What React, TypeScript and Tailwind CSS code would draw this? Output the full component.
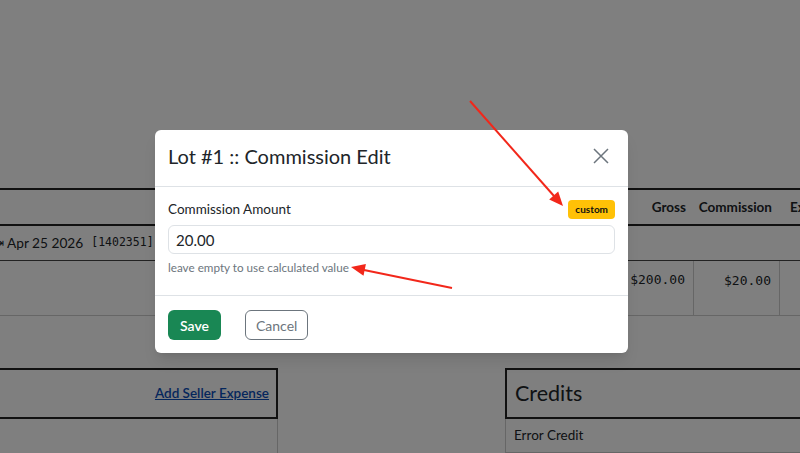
import React from 'react';

const sans = "font-['Lato','Noto_Sans',sans-serif]";
const mono = "font-['DejaVu_Sans_Mono','Liberation_Mono',monospace]";

const Arrows: React.FC = () => (
  <svg className="absolute inset-0 pointer-events-none" width={800} height={453} viewBox="0 0 800 453">
    <line x1={470} y1={101} x2={554} y2={196} stroke="#f2271a" strokeWidth={2} />
    <polygon points="563,206 558.2,191.5 549.2,199.5" fill="#f2271a" />
    <line x1={452} y1={288} x2={364} y2={270} stroke="#f2271a" strokeWidth={2} />
    <polygon points="351,267 365.9,263.9 363.5,275.7" fill="#f2271a" />
  </svg>
);

const CommissionModal: React.FC = () => (
  <div className="w-[473px] bg-white rounded-md shadow-lg text-[#212529]">
    <div className="flex items-start justify-between px-[13px] pt-[14px] h-[57px] border-b border-[#dee2e6]">
      <h5 className="text-[20px] leading-6">Lot #1 :: Commission Edit</h5>
      <button className="w-4 h-4 mt-[4px] mr-[6px] text-[#6c757d]">
        <svg viewBox="0 0 16 16" className="w-4 h-4" fill="none" stroke="currentColor" strokeWidth={1.5}>
          <path d="M1 1l14 14M15 1L1 15" />
        </svg>
      </button>
    </div>
    <div className="px-[13px] pt-[13px] pb-[20px] border-b border-[#dee2e6]">
      <div className="flex items-center justify-between h-[19px]">
        <label className="text-[13.5px]">Commission Amount</label>
        <span className="bg-[#ffc107] text-[#111] text-[10px] font-bold rounded px-[7px] h-[19px] leading-[19px]">custom</span>
      </div>
      <input
        defaultValue="20.00"
        className="mt-[6px] w-full h-[29px] border border-[#dee2e6] rounded-md px-[7px] text-[15px] outline-none"
      />
      <div className="mt-[5px] text-[11.7px] leading-4 text-[#6c757d]">leave empty to use calculated value</div>
    </div>
    <div className="flex items-center gap-6 px-[13px] pt-[14px] pb-[13px]">
      <button className="h-[30px] px-[12px] rounded-md bg-[#198754] text-white text-[14px] font-semibold">Save</button>
      <button className="h-[30px] px-[10px] rounded-md border border-[#6c757d] text-[#6c757d] text-[14px]">Cancel</button>
    </div>
  </div>
);

export default function App() {
  return (
    <div className={`relative w-[800px] h-[453px] overflow-hidden bg-white text-[#212529] ${sans}`}>
      {/* page behind the dialog */}
      <div className="pt-[188px]">
        <div className="border-t-2 border-[#222] w-[880px]">
          <div className="flex h-[36px] items-center text-[13.5px] font-bold border-b-2 border-[#222]">
            <div className="flex-1" />
            <div className="w-[83px] text-right pr-[7px]">Gross</div>
            <div className="w-[86px] text-right pr-[7px]">Commission</div>
            <div className="w-[101px] pl-[11px] text-left">Expenses</div>
          </div>
          <div className="flex h-[35px] items-center border-b border-[#444]">
            <span className="-ml-[6px] text-[12px] mr-[3px]">⇥</span>
            <span className="text-[13.7px]">Apr 25 2026</span>
            <span className={`${mono} text-[11.5px] ml-[8px]`}>[1402351]</span>
          </div>
          <div className="flex h-[55px] border-b border-[#ccc]">
            <div className="flex-1" />
            <div className={`w-[83px] text-right pr-[8px] pt-[9px] ${mono} text-[13px]`}>$200.00</div>
            <div className={`w-[86px] text-right pr-[8px] pt-[10px] border-l border-[#ccc] ${mono} text-[13px]`}>$20.00</div>
            <div className="w-[101px] border-l border-[#ccc]" />
          </div>
        </div>

        <div className="flex justify-between mt-[52px]">
          <div className="w-[278px]">
            <div className="h-[51px] border-2 border-l-0 border-[#222] flex items-center justify-end pr-[7px]">
              <a className="text-[13.5px] font-semibold text-[#0b4db8] underline">Add Seller Expense</a>
            </div>
            <div className="h-[40px] border-r border-[#ccc]" />
          </div>
          <div className="w-[295px]">
            <div className="h-[51px] border-2 border-r-0 border-[#222] flex items-center pl-[8px]">
              <span className="text-[21.5px]">Credits</span>
            </div>
            <div className="h-[34px] border-l border-b border-[#ccc] flex items-center pl-[8px] text-[13.5px]">Error Credit</div>
          </div>
        </div>
      </div>

      {/* modal backdrop */}
      <div className="absolute inset-0 bg-black/50 pt-[130px] pl-[155px]">
        <CommissionModal />
      </div>

      <Arrows />
    </div>
  );
}
